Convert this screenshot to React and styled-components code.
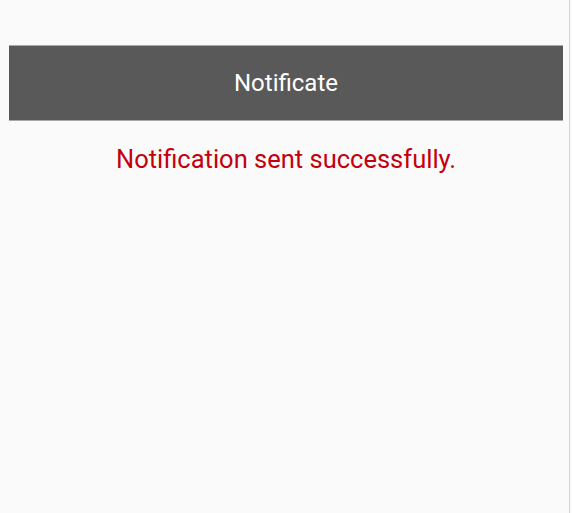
import styled, { createGlobalStyle } from "styled-components";

const Global = createGlobalStyle`
  html, body {
    margin: 0;
    padding: 0;
    background: #fafafa;
    font-family: Roboto, "Liberation Sans", sans-serif;
  }
`;

const Page = styled.div`
  box-sizing: border-box;
  width: 570px;
  height: 100vh;
  border-right: 1px solid #d4d4d4;
  padding: 45px 7px 0 9px;
  display: flex;
  flex-direction: column;
  align-items: stretch;
`;

const Button = styled.button`
  height: 76px;
  width: 554px;
  background: #595959;
  color: #ffffff;
  border: none;
  border-top: 1px solid #a8a8a8;
  border-bottom: 1px solid #a8a8a8;
  font-family: Roboto, "Liberation Sans", sans-serif;
  font-size: 24px;
  cursor: pointer;
`;

const Message = styled.p`
  width: 554px;
  margin: 23px 0 0;
  text-align: center;
  color: #c5000d;
  font-size: 25.5px;
  line-height: 30px;
`;

export default function App() {
  return (
    <>
      <Global />
      <Page>
        <Button>Notificate</Button>
        <Message>Notification sent successfully.</Message>
      </Page>
    </>
  );
}
